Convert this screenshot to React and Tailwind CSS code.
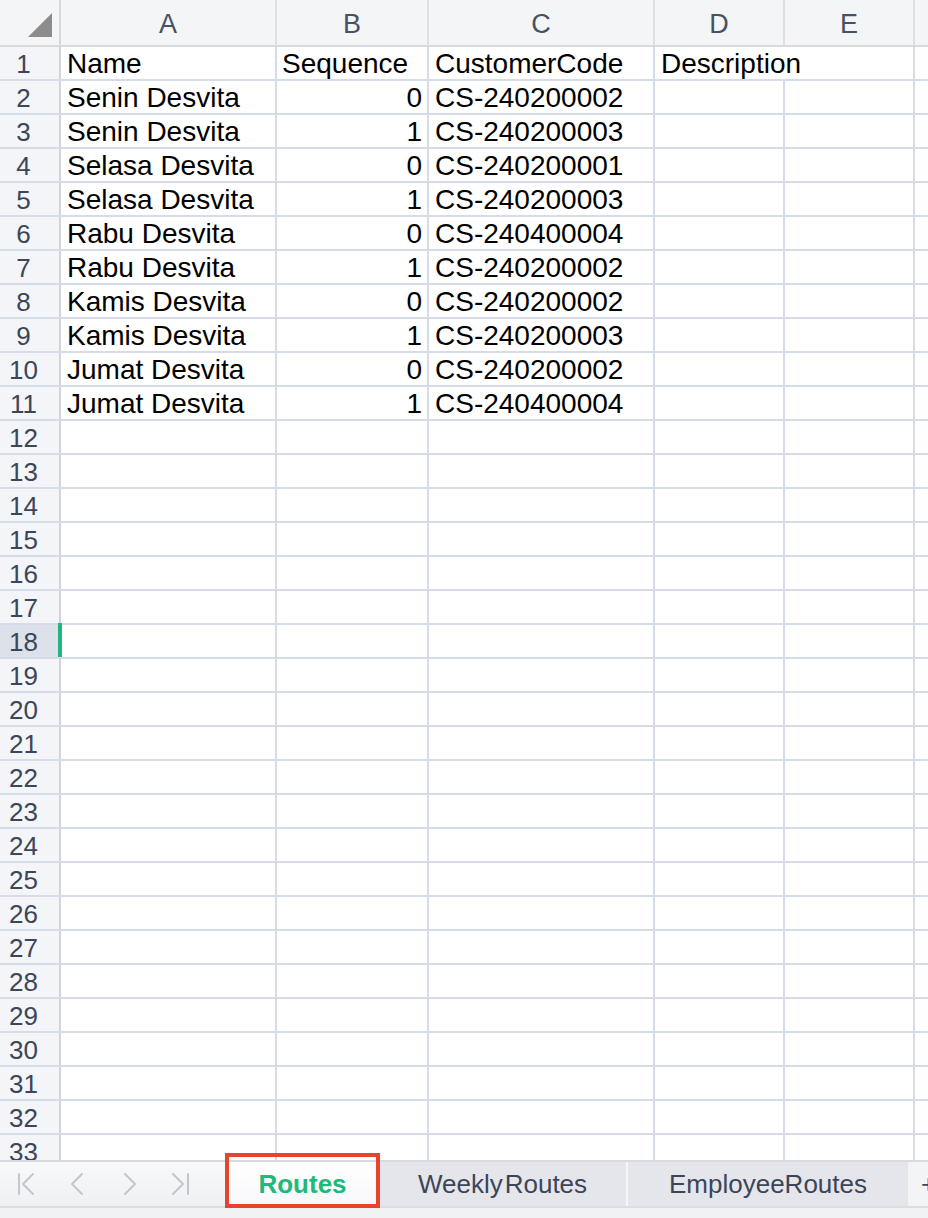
import React from 'react';

const rows = [
  ['Name', 'Sequence', 'CustomerCode', 'Description'],
  ['Senin Desvita', '0', 'CS-240200002'],
  ['Senin Desvita', '1', 'CS-240200003'],
  ['Selasa Desvita', '0', 'CS-240200001'],
  ['Selasa Desvita', '1', 'CS-240200003'],
  ['Rabu Desvita', '0', 'CS-240400004'],
  ['Rabu Desvita', '1', 'CS-240200002'],
  ['Kamis Desvita', '0', 'CS-240200002'],
  ['Kamis Desvita', '1', 'CS-240200003'],
  ['Jumat Desvita', '0', 'CS-240200002'],
  ['Jumat Desvita', '1', 'CS-240400004'],
];

const line = 'border-[#d6dce7]';

function HeaderRow() {
  const letters = [
    ['A', 'w-[216px]'],
    ['B', 'w-[152px]'],
    ['C', 'w-[226px]'],
    ['D', 'w-[130px]'],
    ['E', 'w-[130px]'],
  ];
  return (
    <div className="flex h-[47px] shrink-0 border-b-2 border-[#d9d9db] bg-[#f4f5f7]">
      <div className="relative w-[61px] shrink-0 border-r-2 border-[#d9d9db]">
        <svg className="absolute left-[28px] top-[13px]" width="24" height="24" viewBox="0 0 24 24">
          <polygon points="24,0 24,24 0,24" fill="#8c8c8c" />
        </svg>
      </div>
      {letters.map(([l, w]) => (
        <div key={l} className={`${w} shrink-0 border-r-2 border-[#e0e0e2] flex items-center justify-center pt-[4px] text-[27px] text-[#475164]`}>
          {l}
        </div>
      ))}
      <div className="flex-1" />
    </div>
  );
}

function Row({ n, data }) {
  const selected = n === 18;
  const first = n === 1;
  return (
    <div className={`flex h-[34px] shrink-0 border-b-2 ${line}`}>
      <div
        className={`w-[61px] shrink-0 border-r-2 border-[#d4d4d6] text-center pr-[12px] text-[26px] leading-[34px] text-[#3c4659] ${
          selected ? 'bg-[#dde1ea]' : 'bg-[#f4f5f8]'
        }`}
      >
        {n}
      </div>
      <div className={`relative w-[216px] shrink-0 border-r-2 ${line} pl-[6px] text-[28px] leading-[34px] text-black whitespace-nowrap`}>
        {selected && <div className="absolute -left-[3px] top-[-2px] h-[34px] w-[4px] bg-[#21b67a]" />}
        {data?.[0]}
      </div>
      <div className={`w-[152px] shrink-0 border-r-2 ${line} px-[5px] text-[28px] leading-[34px] text-black whitespace-nowrap ${first ? 'text-left' : 'text-right'}`}>
        {data?.[1]}
      </div>
      <div className={`w-[226px] shrink-0 border-r-2 ${line} pl-[6px] text-[28px] leading-[34px] text-black whitespace-nowrap`}>
        {data?.[2]}
      </div>
      <div className={`w-[130px] shrink-0 ${first ? 'border-r-2 border-transparent' : `border-r-2 ${line}`} pl-[6px] text-[28px] leading-[34px] text-black whitespace-nowrap overflow-visible relative z-10`}>
        {data?.[3]}
      </div>
      <div className={`w-[130px] shrink-0 border-r-2 ${line}`} />
      <div className="flex-1" />
    </div>
  );
}

function NavIcon({ kind }) {
  return (
    <svg width="22" height="26" viewBox="0 0 22 26" fill="none" stroke="#c3c6cd" strokeWidth="2" strokeLinecap="round" strokeLinejoin="round">
      {kind === 'first' && (
        <>
          <line x1="3" y1="3" x2="3" y2="23" />
          <polyline points="17,3 7,13 17,23" />
        </>
      )}
      {kind === 'prev' && <polyline points="15,3 5,13 15,23" />}
      {kind === 'next' && <polyline points="7,3 17,13 7,23" />}
      {kind === 'last' && (
        <>
          <polyline points="4,3 14,13 4,23" />
          <line x1="19" y1="3" x2="19" y2="23" />
        </>
      )}
    </svg>
  );
}

function TabBar() {
  return (
    <div className="relative flex h-[46px] shrink-0 border-t-2 border-[#d9dadf]">
      <div className="flex w-[226px] shrink-0 items-center bg-gradient-to-b from-[#f8f9fa] to-[#eef0f3]">
        <div className="ml-[16px]"><NavIcon kind="first" /></div>
        <div className="ml-[29px]"><NavIcon kind="prev" /></div>
        <div className="ml-[29px]"><NavIcon kind="next" /></div>
        <div className="ml-[29px]"><NavIcon kind="last" /></div>
      </div>
      <div className="flex w-[153px] shrink-0 items-center justify-center bg-gradient-to-b from-white to-[#f7f8fa] text-[26px] font-bold text-[#20b97b]">
        Routes
      </div>
      <div className="flex w-[249px] shrink-0 items-center justify-center border-r-2 border-[#f5f6f8] bg-[#e4e6eb] text-[26px] text-[#3c4558]">
        Weekly<span className="ml-[2px]">Routes</span>
      </div>
      <div className="flex w-[280px] shrink-0 items-center justify-center bg-[#e4e6eb] text-[26px] text-[#3c4558]">
        EmployeeRoutes
      </div>
      <div className="flex flex-1 items-center overflow-hidden bg-[#f3f4f6] pl-[13px] text-[26px] text-[#3c4558]">
        +
      </div>
      <div className="pointer-events-none absolute left-[225px] top-[-9px] h-[55px] w-[155px] border-4 border-[#e8432b]" />
    </div>
  );
}

export default function App() {
  const numbers = Array.from({ length: 33 }, (_, i) => i + 1);
  return (
    <div className="flex h-[1218px] w-[928px] flex-col overflow-hidden bg-white font-['Liberation_Sans',Arial,sans-serif]">
      <div className="flex h-[1160px] shrink-0 flex-col overflow-hidden">
        <HeaderRow />
        {numbers.map((n) => (
          <Row key={n} n={n} data={rows[n - 1]} />
        ))}
      </div>
      <TabBar />
      <div className="h-[12px] shrink-0 border-t-2 border-[#dcdde2] bg-[#f1f2f4]" />
    </div>
  );
}
